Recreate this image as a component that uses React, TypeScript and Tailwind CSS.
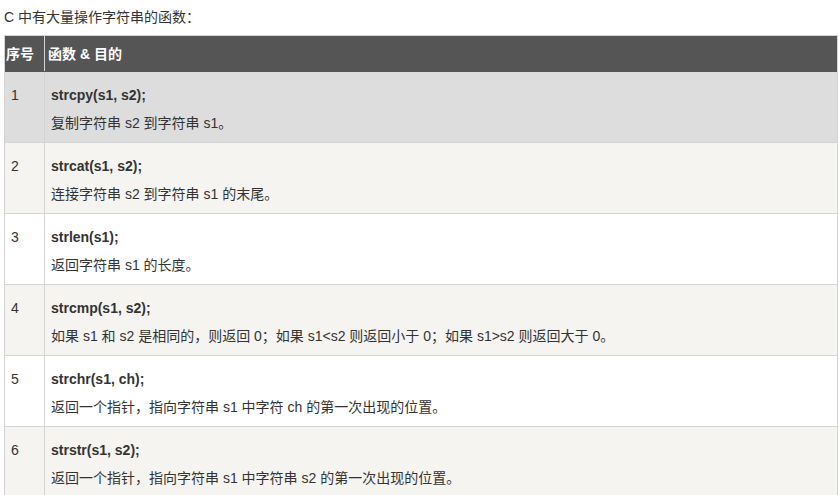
import React from 'react';

const ROWS: { no: string; fn: string; desc: string }[] = [
  { no: '1', fn: 'strcpy(s1, s2);', desc: '复制字符串 s2 到字符串 s1。' },
  { no: '2', fn: 'strcat(s1, s2);', desc: '连接字符串 s2 到字符串 s1 的末尾。' },
  { no: '3', fn: 'strlen(s1);', desc: '返回字符串 s1 的长度。' },
  {
    no: '4',
    fn: 'strcmp(s1, s2);',
    desc: '如果 s1 和 s2 是相同的，则返回 0；如果 s1<s2 则返回小于 0；如果 s1>s2 则返回大于 0。',
  },
  { no: '5', fn: 'strchr(s1, ch);', desc: '返回一个指针，指向字符串 s1 中字符 ch 的第一次出现的位置。' },
  { no: '6', fn: 'strstr(s1, s2);', desc: '返回一个指针，指向字符串 s1 中字符串 s2 的第一次出现的位置。' },
];

const ROW_BG = ['bg-[#dddddd]', 'bg-[#f5f4f0]', 'bg-white', 'bg-[#f5f4f0]', 'bg-white', 'bg-[#f5f4f0]'];

export default function App() {
  return (
    <div className="w-[839px] h-[495px] overflow-hidden bg-white text-[#333333] text-[14px] font-['Liberation_Sans','Noto_Sans_CJK_SC',sans-serif]">
      {/* intro line */}
      <p className="px-[4px] pt-[7px] pb-[8px] leading-[20px]">C 中有大量操作字符串的函数：</p>

      {/* table */}
      <div className="ml-[4px] w-[834px] border border-[#d4d4d4]">
        <div className="grid grid-cols-[40px_1fr] h-[35px] bg-[#555555] text-white font-bold leading-[20px]">
          <div className="flex items-center pt-[1px] pl-[1px] border-r border-[#d4d4d4]">序号</div>
          <div className="flex items-center pt-[1px] pl-[3px]">函数 &amp; 目的</div>
        </div>

        {ROWS.map((row, i) => (
          <div
            key={row.no}
            className={`grid grid-cols-[40px_1fr] h-[71px] border-t ${i === 0 ? 'border-[#555555]' : 'border-[#d4d4d4]'} ${ROW_BG[i]} leading-[20px]`}
          >
            <div className="px-[6px] pt-[13px] border-r border-[#d4d4d4]">{row.no}</div>
            <div className="px-[6px] pt-[13px]">
              <p className="font-bold">{row.fn}</p>
              <p className="mt-[8px]">{row.desc}</p>
            </div>
          </div>
        ))}
      </div>
    </div>
  );
}
